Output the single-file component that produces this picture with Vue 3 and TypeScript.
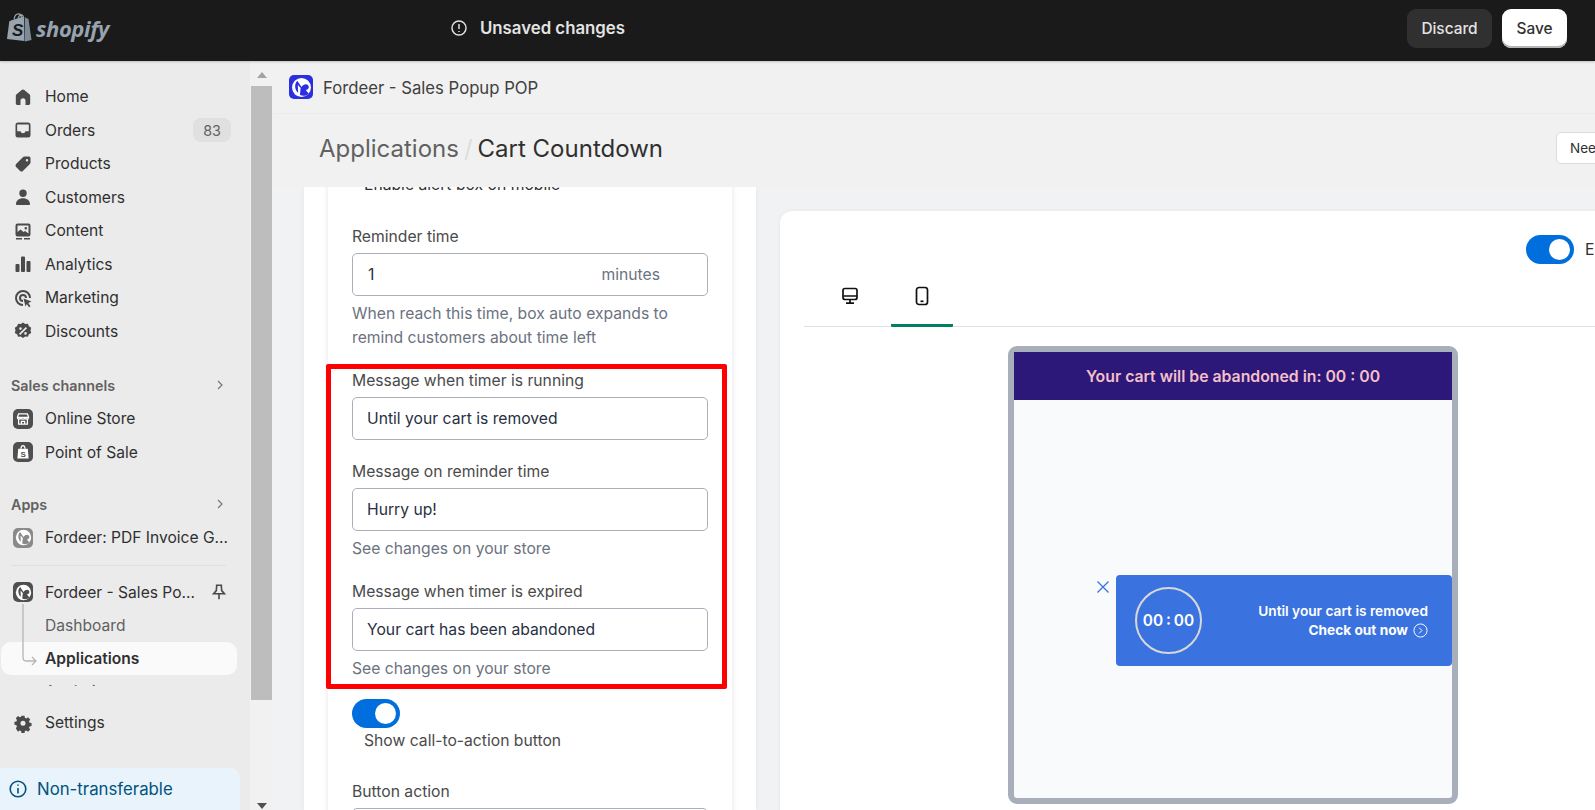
<script setup lang="ts">
interface NavItem {
  label: string;
  icon: string;
  badge?: string;
}

const mainNav: NavItem[] = [
  { label: 'Home', icon: 'M8.700 3 3.600 7.200C3 7.700 2.800 8.300 2.800 9v7.200c0 1 .8 1.800 1.800 1.800H7.500v-4.200a2.500 2.500 0 0 1 5 0V18h2.900c1 0 1.800-.8 1.800-1.800V9c0-.7-.2-1.300-.8-1.800L11.300 3a2 2 0 0 0-2.600 0z' },
  { label: 'Orders', badge: '83', icon: 'M5 2.500h10A2.500 2.500 0 0 1 17.500 5v10a2.500 2.500 0 0 1-2.500 2.500H5A2.500 2.500 0 0 1 2.500 15V5A2.500 2.500 0 0 1 5 2.500zm-.8 2v6.700h3.300c.4 1.300 1.300 2 2.500 2s2.100-.7 2.500-2h3.300V4.500z' },
  { label: 'Products', icon: 'M11.500 2.500H16A1.500 1.500 0 0 1 17.500 4v4.500c0 .5-.2 1-.6 1.400l-7 7a2 2 0 0 1-2.800 0l-4-4a2 2 0 0 1 0-2.800l7-7c.4-.4.9-.6 1.400-.6zM14 5a1.200 1.200 0 1 0 0 2.400A1.200 1.200 0 0 0 14 5z' },
  { label: 'Customers', icon: 'M10 2.500a3.700 3.700 0 1 1 0 7.400 3.700 3.700 0 0 1 0-7.400zM3 17c0-3.500 3-5.800 7-5.800s7 2.300 7 5.800c0 .6-.4 1-1 1H4c-.6 0-1-.4-1-1z' },
  { label: 'Content', icon: 'M4.500 2.500h11a2 2 0 0 1 2 2v9a2 2 0 0 1-2 2h-11a2 2 0 0 1-2-2v-9a2 2 0 0 1 2-2zm0 2V11l3-2.500 3 2.500 1.500-1 3.500 2.500v-8zM12.800 6a1.300 1.300 0 1 0 0 2.600 1.300 1.300 0 0 0 0-2.600zM3 17h6v1.500H3zm8 0h6v1.500h-6z' },
  { label: 'Analytics', icon: 'M3.500 10h2a1 1 0 0 1 1 1v6a1 1 0 0 1-1 1h-2a1 1 0 0 1-1-1v-6a1 1 0 0 1 1-1zM9 2.500h2a1 1 0 0 1 1 1V17a1 1 0 0 1-1 1H9a1 1 0 0 1-1-1V3.500a1 1 0 0 1 1-1zM14.500 7h2a1 1 0 0 1 1 1v9a1 1 0 0 1-1 1h-2a1 1 0 0 1-1-1V8a1 1 0 0 1 1-1z' },
  { label: 'Marketing', icon: 'M10 2a8 8 0 0 1 8 8h-2a6 6 0 1 0-6 6v2a8 8 0 0 1 0-16zm0 4a4 4 0 0 1 4 4h-2a2 2 0 1 0-2 2v2a4 4 0 0 1 0-8zm.500 4.500 8 3-3.200 1.500 2.200 3.200-1.500 1-2.200-3.200-1.300 2.500z' },
  { label: 'Discounts', icon: 'M10 1.500l2.200 1.500 2.700-.2 1 2.500 2.300 1.400-.7 2.600.7 2.600-2.300 1.400-1 2.500-2.700-.2-2.200 1.500-2.200-1.500-2.700.2-1-2.500-2.300-1.400.7-2.600-.7-2.600 2.300-1.400 1-2.500 2.700.2zM7.500 6.300a1.300 1.300 0 1 0 0 2.600 1.300 1.300 0 0 0 0-2.600zm5 4.800a1.300 1.300 0 1 0 0 2.600 1.300 1.300 0 0 0 0-2.600zM12.800 6 6 12.800 7.200 14 14 7.200z' },
];

const fordeerMark = 'M6 3.500 10 9.500C12 6.500 15 6 16.500 8c1.200 1.800 0 4-2.500 4.300l3 3.700c-2 2-6 2.700-8.500 1l.7-6.500L6.500 7.500 6.800 15C4 13 2.500 7 6 3.500z';
</script>

<template>
  <div class="app">
    <header class="topbar">
      <div class="brand">
        <svg class="bag" viewBox="0 0 26 29" width="26" height="29">
          <path d="M8 6.500C8.500 3 10.500 .8 12.500 .8c2 0 3 1.800 3 4.500M12 6c.5-2 1.500-4 3-4.300 2 .3 2.500 2 2.500 3.800" fill="none" stroke="#97a3ae" stroke-width="1.200" />
          <path d="M1 26 3.300 8.300C3.400 7.800 17.500 3.500 18 3.800L18.500 28z" fill="#97a3ae" />
          <path d="M18.800 4 21 5.500l1.500.3L25.500 27l-6.500 1.600z" fill="#7e8a95" />
          <text x="6" y="22.500" class="bag-s">S</text>
        </svg>
        <span class="brand-name">shopify</span>
      </div>
      <div class="unsaved">
        <svg viewBox="0 0 20 20" width="18" height="18" fill="none" stroke="#e3e3e3" stroke-width="1.600">
          <circle cx="10" cy="10" r="7.800" />
          <path d="M10 5.500V11M10 13.300v1.200" />
        </svg>
        <span>Unsaved changes</span>
      </div>
      <div class="top-actions">
        <button class="btn-discard">Discard</button>
        <button class="btn-save">Save</button>
      </div>
    </header>

    <div class="body">
      <nav class="sidebar">
        <div class="nav-main">
          <a v-for="item in mainNav" :key="item.label" class="nav-row">
            <svg class="nav-icon" viewBox="0 0 20 20" width="20" height="20"><path :d="item.icon" fill="#4a4a4a" /></svg>
            <span class="nav-label">{{ item.label }}</span>
            <span v-if="item.badge" class="badge">{{ item.badge }}</span>
          </a>
        </div>

        <div class="nav-heading heading-sales">
          <span>Sales channels</span>
          <svg viewBox="0 0 10 10" width="10" height="10" fill="none" stroke="#777" stroke-width="1.200"><path d="m3 1 4 4-4 4" /></svg>
        </div>
        <a class="nav-row">
          <span class="app-tile">
            <svg viewBox="0 0 20 20" width="16" height="16" fill="none" stroke="#fff" stroke-width="1.600"><path d="M3 8h14M4.500 3.500h11L17 8c0 1.200-1 2-2.300 2s-2.200-.8-2.200-2c0 1.200-1 2-2.500 2s-2.500-.8-2.500-2c0 1.200-1 2-2.200 2S3 9.200 3 8zM4.500 10v6.500h11V10M8 16.500V13h4v3.500" /></svg>
          </span>
          <span class="nav-label">Online Store</span>
        </a>
        <a class="nav-row">
          <span class="app-tile">
            <svg viewBox="0 0 20 20" width="16" height="16"><path d="M4 6h12l1 12H3z" fill="#fff" /><path d="M7.500 6c0-3 1-4 2.500-4s2.500 1 2.500 4" fill="none" stroke="#fff" stroke-width="1.500" /><text x="7" y="16" class="pos-s">S</text></svg>
          </span>
          <span class="nav-label">Point of Sale</span>
        </a>

        <div class="nav-heading heading-apps">
          <span>Apps</span>
          <svg viewBox="0 0 10 10" width="10" height="10" fill="none" stroke="#777" stroke-width="1.200"><path d="m3 1 4 4-4 4" /></svg>
        </div>
        <a class="nav-row">
          <span class="app-tile tile-light">
            <svg viewBox="0 0 20 20" width="17" height="17"><circle cx="10" cy="10" r="9" fill="#fff" /><path :d="fordeerMark" fill="#8a8a8a" /></svg>
          </span>
          <span class="nav-label">Fordeer: PDF Invoice G...</span>
        </a>
        <div class="nav-divider"></div>
        <a class="nav-row">
          <span class="app-tile">
            <svg viewBox="0 0 20 20" width="17" height="17"><circle cx="10" cy="10" r="9" fill="#fff" /><path :d="fordeerMark" fill="#4f4f4f" /></svg>
          </span>
          <span class="nav-label">Fordeer - Sales Po...</span>
          <svg class="pin" viewBox="0 0 20 20" width="18" height="18" fill="none" stroke="#4a4a4a" stroke-width="1.800"><path d="M6.500 2.500h7M7.500 2.500l-.5 6-3 3.500h12L13 8.500l-.5-6M10 12v6" /></svg>
        </a>
        <div class="sub-nav">
          <svg class="tree" viewBox="0 0 24 64" width="24" height="64" fill="none" stroke="#b5b5b5" stroke-width="1.300"><path d="M2 0v53c0 3 1 4 3 4h9M11 53l4 4-4 4" /></svg>
          <a class="sub-row">Dashboard</a>
          <a class="sub-row sub-active">Applications</a>
          <a class="sub-row">Analytics</a>
        </div>
        <a class="nav-row row-settings">
          <svg class="nav-icon" viewBox="0 0 20 20" width="20" height="20"><path fill-rule="evenodd" d="M8.300 2h3.400l.4 2.300 1.500.7 2-1.300 2.400 2.400-1.300 2 .6 1.500 2.200.4v3.400l-2.200.4-.6 1.500 1.300 2-2.400 2.400-2-1.300-1.500.6-.4 2.200H8.300l-.4-2.200-1.500-.6-2 1.300L2 15.900l1.300-2-.6-1.500-2.200-.4V8.600l2.200-.4.6-1.500L2 4.700l2.400-2.400 2 1.300 1.500-.6zM10 7.400a2.800 2.800 0 1 0 0 5.600 2.800 2.800 0 0 0 0-5.600z" fill="#4a4a4a" transform="translate(1 1) scale(.9)" /></svg>
          <span class="nav-label">Settings</span>
        </a>
        <div class="transfer">
          <svg viewBox="0 0 20 20" width="20" height="20" fill="none" stroke="#00527c" stroke-width="1.600"><circle cx="10" cy="10" r="7.800" /><path d="M10 9v5.500M10 5.500v1.300" /></svg>
          <span>Non-transferable</span>
        </div>
      </nav>

      <div class="scrollbar">
        <span class="arrow-up"></span>
        <div class="thumb"></div>
        <span class="arrow-down"></span>
      </div>

      <main class="main">
        <div class="appbar">
          <span class="app-logo">
            <svg viewBox="0 0 20 20" width="21" height="21"><circle cx="10" cy="10" r="9" fill="#fff" /><path :d="fordeerMark" fill="#2a2fe0" /></svg>
          </span>
          <span class="app-name">Fordeer - Sales Popup POP</span>
        </div>
        <div class="page-head">
          <h1 class="crumbs">
            <span class="crumb-parent">Applications</span>
            <span class="crumb-sep">/</span>
            <span>Cart Countdown</span>
          </h1>
          <button class="need-btn">Need help</button>
        </div>

        <div class="content">
          <section class="left-card">
            <div class="form-card">
              <div class="field-clipped">Enable alert box on mobile</div>

              <label class="label label-reminder">Reminder time</label>
              <div class="input">
                <span class="input-num">1</span>
                <span class="input-suffix">minutes</span>
              </div>
              <p class="help help-two">When reach this time, box auto expands to remind customers about time left</p>

              <label class="label label-running">Message when timer is running</label>
              <div class="input">Until your cart is removed</div>

              <label class="label label-reminder-msg">Message on reminder time</label>
              <div class="input">Hurry up!</div>
              <p class="help">See changes on your store</p>

              <label class="label label-expired">Message when timer is expired</label>
              <div class="input">Your cart has been abandoned</div>
              <p class="help">See changes on your store</p>

              <div class="toggle toggle-cta"><span class="knob"></span></div>
              <div class="toggle-label">Show call-to-action button</div>

              <label class="label label-action">Button action</label>
              <div class="input"></div>

              <div class="highlight"></div>
            </div>
          </section>

          <section class="preview-card">
            <div class="enable-row">
              <div class="toggle"><span class="knob"></span></div>
              <span class="enable-text">Enable</span>
            </div>
            <div class="tabs">
              <div class="tab">
                <svg viewBox="0 0 20 20" width="20" height="20" fill="none" stroke="#111" stroke-width="1.700"><rect x="3" y="2.500" width="14" height="11" rx="2" /><path d="M3 10h14M10 13.500v3M6 17.200h8" /></svg>
              </div>
              <div class="tab tab-active">
                <svg viewBox="0 0 20 20" width="20" height="20" fill="none" stroke="#111" stroke-width="1.700"><rect x="4.500" y="1.500" width="11" height="17" rx="2.500" /><path d="M8.500 15.300h3" /></svg>
              </div>
            </div>

            <div class="device">
              <div class="device-banner">Your cart will be abandoned in: 00 : 00</div>
              <div class="device-screen">
                <button class="popup-close">
                  <svg viewBox="0 0 14 14" width="14" height="14" fill="none" stroke="#3a73e0" stroke-width="1.300"><path d="m1.500 1.500 11 11M12.500 1.500l-11 11" /></svg>
                </button>
                <div class="popup">
                  <div class="timer">00 : 00</div>
                  <div class="popup-text">
                    <div class="popup-msg">Until your cart is removed</div>
                    <div class="popup-cta">
                      <span>Check out now</span>
                      <svg viewBox="0 0 16 16" width="15" height="15" fill="none" stroke="#fff" stroke-width="1"><circle cx="8" cy="8" r="7" /><path d="m6.500 5 3 3-3 3" /></svg>
                    </div>
                  </div>
                </div>
              </div>
            </div>
          </section>
        </div>
      </main>
    </div>
  </div>
</template>

<style>
html,
body {
  margin: 0;
  overflow: hidden;
}
</style>

<style scoped>
.app {
  width: 1595px;
  height: 810px;
  display: flex;
  flex-direction: column;
  overflow: hidden;
  background: #f1f1f1;
  font-family: Inter, "Noto Sans", sans-serif;
  color: #303030;
}

/* top bar */
.topbar {
  height: 61px;
  flex: none;
  background: #1a1a1a;
  display: flex;
  align-items: center;
  position: relative;
  box-shadow: 0 1px 2px rgba(0, 0, 0, 0.2);
  z-index: 2;
}

.brand {
  display: flex;
  align-items: center;
  gap: 4px;
  padding: 0 0 6px 6px;
  width: 450px;
  box-sizing: border-box;
}

.bag-s {
  font: italic 700 17px "Liberation Sans", sans-serif;
  fill: #1a1a1a;
}

.pos-s {
  font: 700 10px "Liberation Sans", sans-serif;
  fill: #4f4f4f;
}

.brand-name {
  font: italic 700 22px "Open Sans", sans-serif;
  color: #97a3ae;
  letter-spacing: -0.4px;
}

.unsaved {
  display: flex;
  align-items: center;
  gap: 12px;
  padding-bottom: 5px;
  color: #e3e3e3;
  font-size: 16.800px;
  font-weight: 600;
}

.top-actions {
  margin-left: auto;
  padding: 0 28px 5px 0;
  display: flex;
  gap: 10px;
}

.top-actions button {
  height: 39px;
  border: 0;
  border-radius: 9px;
  font: 500 15.400px Inter, sans-serif;
}

.btn-discard {
  width: 85px;
  background: #303030;
  color: #e3e3e3;
}

.btn-save {
  width: 65px;
  background: #fff;
  color: #303030;
  box-shadow: inset 0 -2px 0 #b5b5b5;
}

.body {
  flex: 1;
  min-height: 0;
  display: flex;
}

/* sidebar */
.sidebar {
  width: 250px;
  flex: none;
  background: #ebebeb;
  box-sizing: border-box;
  padding-top: 19px;
  display: flex;
  flex-direction: column;
  font-size: 15.600px;
  position: relative;
}

.nav-row {
  height: 33.500px;
  flex: none;
  display: flex;
  align-items: center;
  padding: 0 19px 0 13px;
  box-sizing: border-box;
}

.nav-icon {
  flex: none;
  margin-right: 12px;
}

.nav-label {
  white-space: nowrap;
  color: #303030;
}

.badge {
  margin-left: auto;
  width: 38px;
  height: 24px;
  border-radius: 8px;
  background: #e0e0e0;
  display: flex;
  align-items: center;
  justify-content: center;
  font-size: 14.300px;
  color: #616161;
}

.nav-heading {
  height: 24px;
  flex: none;
  display: flex;
  align-items: center;
  justify-content: space-between;
  padding: 0 25px 0 11px;
  margin-bottom: 5px;
  font-size: 14.300px;
  font-weight: 600;
  color: #616161;
}

.heading-sales {
  margin-top: 25px;
}

.heading-apps {
  margin-top: 23px;
}

.app-tile {
  width: 20px;
  height: 20px;
  border-radius: 5px;
  background: #4f4f4f;
  display: flex;
  align-items: center;
  justify-content: center;
  margin-right: 12px;
  flex: none;
}

.tile-light {
  background: #8a8a8a;
}

.nav-divider {
  height: 1px;
  flex: none;
  background: #e0e0e0;
  margin: 10px 24px 10px 11px;
}

.pin {
  margin-left: auto;
  margin-right: 3px;
  flex: none;
}

.sub-nav {
  position: relative;
  height: 82px;
  box-sizing: border-box;
  margin-top: -5px;
  padding-top: 5px;
  flex: none;
  overflow: hidden;
  display: flex;
  flex-direction: column;
}

.tree {
  position: absolute;
  left: 21px;
  top: 0;
  z-index: 1;
}

.sub-row {
  height: 33px;
  flex: none;
  display: flex;
  align-items: center;
  margin: 0 13px 0 1px;
  padding-left: 44px;
  color: #616161;
  border-radius: 10px;
}

.sub-active {
  background: #fafafa;
  color: #303030;
  font-weight: 600;
}

.row-settings {
  margin-top: 20px;
}

.transfer {
  position: absolute;
  left: 0;
  bottom: 0;
  width: 240px;
  height: 42px;
  box-sizing: border-box;
  padding: 0 0 0 8px;
  background: #e8f3fc;
  border-radius: 0 10px 0 0;
  display: flex;
  align-items: center;
  gap: 9px;
  color: #00527c;
  font-size: 16.800px;
}

/* page scrollbar */
.scrollbar {
  width: 23px;
  flex: none;
  background: #f1f1f1;
  display: flex;
  flex-direction: column;
  align-items: center;
}

.arrow-up {
  margin-top: 11px;
  border: 5px solid transparent;
  border-top: 0;
  border-bottom: 6px solid #a3a3a3;
}

.thumb {
  width: 21px;
  height: 614px;
  margin-top: 8px;
  background: #bdbdbd;
}

.arrow-down {
  margin-top: auto;
  margin-bottom: 1px;
  border: 5px solid transparent;
  border-bottom: 0;
  border-top: 6px solid #505050;
}

/* main */
.main {
  flex: 1;
  min-width: 0;
  display: flex;
  flex-direction: column;
}

.appbar {
  height: 52px;
  flex: none;
  display: flex;
  align-items: center;
  gap: 10px;
  padding-left: 16px;
  border-bottom: 1px solid #ebebeb;
  font-size: 16.700px;
  color: #404040;
}

.app-name {
  padding-top: 2px;
}

.app-logo {
  width: 24px;
  height: 24px;
  border-radius: 5px;
  background: #2a2fe0;
  display: flex;
  align-items: center;
  justify-content: center;
}

.page-head {
  height: 73px;
  flex: none;
  display: flex;
  align-items: center;
  padding: 0 0 5px 46px;
  box-sizing: border-box;
}

.crumbs {
  margin: 0;
  display: flex;
  gap: 5px;
  font-size: 24px;
  font-weight: 400;
  color: #303030;
}

.crumb-parent {
  color: #616161;
}

.crumb-sep {
  color: #ddd;
}

.need-btn {
  margin-left: auto;
  margin-right: -60px;
  width: 99px;
  height: 32px;
  flex: none;
  padding: 0 0 0 13px;
  text-align: left;
  background: #fff;
  border: 1px solid #dcdcdc;
  border-radius: 5px;
  font: 13.500px Inter, sans-serif;
  color: #303030;
}

.content {
  flex: 1;
  min-height: 0;
  display: flex;
  gap: 24px;
  padding-left: 31px;
  overflow: hidden;
  background: #f1f2f4;
}

.left-card {
  width: 452px;
  flex: none;
  background: #fff;
  padding: 0 24px;
  box-sizing: border-box;
  box-shadow: 0 0 6px rgba(0, 0, 0, 0.06);
}

.form-card {
  height: 700px;
  box-sizing: border-box;
  margin-top: -14px;
  padding: 0 24px;
  background: #fff;
  box-shadow: 0 0 6px rgba(0, 0, 0, 0.1);
  position: relative;
  font-size: 15.700px;
  line-height: 24px;
}

.field-clipped {
  padding-left: 12px;
}

.label {
  display: block;
  margin-bottom: 4px;
  color: #4a4a4a;
}

.label-reminder {
  margin-top: 28px;
}

.label-running {
  margin-top: 19px;
}

.label-reminder-msg {
  margin-top: 20px;
}

.label-expired {
  margin-top: 19px;
}

.label-action {
  margin-top: 27px;
}

.input {
  height: 43px;
  box-sizing: border-box;
  border: 1px solid #a9aeb8;
  border-radius: 5px;
  padding: 1px 14px 0;
  display: flex;
  align-items: center;
  background: #fff;
  color: #27303f;
}

.input-num {
  flex: 1;
  padding-left: 1px;
}

.input-suffix {
  color: #6b7280;
  margin-right: 33px;
}

.help {
  margin: 6px 0 0;
  color: #6b7280;
}

.toggle {
  width: 48px;
  height: 29px;
  box-sizing: border-box;
  border-radius: 15px;
  background: #006fdd;
  display: flex;
  align-items: center;
  justify-content: flex-end;
  padding-right: 4px;
  flex: none;
}

.toggle-cta {
  margin-top: 18px;
}

.knob {
  width: 21px;
  height: 21px;
  border-radius: 50%;
  background: #fff;
}

.toggle-label {
  padding-left: 12px;
  margin-top: 1px;
  color: #4a4a4a;
}

/* screenshot annotation */
.highlight {
  position: absolute;
  left: -2px;
  top: 191px;
  width: 401px;
  height: 325px;
  box-sizing: border-box;
  border: 5px solid #fe0000;
  border-radius: 2px;
  pointer-events: none;
}

/* preview */
.preview-card {
  width: 1000px;
  flex: none;
  height: 700px;
  margin-top: 24px;
  background: #fff;
  border-radius: 12px 0 0 0;
  box-sizing: border-box;
  padding: 24px 24px 0;
  box-shadow: 0 0 4px rgba(0, 0, 0, 0.05);
}

.enable-row {
  display: flex;
  align-items: center;
  gap: 11px;
  padding-left: 722px;
  font-size: 15.700px;
}

.tabs {
  display: flex;
  height: 64px;
  box-sizing: border-box;
  margin-top: -1px;
  padding-left: 15px;
  border-bottom: 1px solid #dfe0e6;
}

.tab {
  width: 62px;
  height: 64px;
  box-sizing: border-box;
  margin-right: 10px;
  padding-top: 23px;
  display: flex;
  justify-content: center;
}

.tab-active {
  border-bottom: 3px solid #008060;
  border-radius: 0 0 1px 1px;
}

.device {
  width: 450px;
  height: 458px;
  box-sizing: border-box;
  margin: 19px 0 0 204px;
  border: 6px solid #a8afbb;
  border-radius: 9px;
  background: #f9fafb;
  display: flex;
  flex-direction: column;
}

.device-banner {
  height: 48px;
  flex: none;
  background: #2b1878;
  color: #f5bfca;
  display: flex;
  align-items: center;
  justify-content: center;
  font-size: 15.800px;
  font-weight: 600;
}

.device-screen {
  flex: 1;
  display: flex;
  align-items: flex-start;
  justify-content: flex-end;
  padding-top: 175px;
}

.popup-close {
  background: none;
  border: 0;
  padding: 0;
  margin: 5px 6px 0 0;
  height: 14px;
  display: flex;
}

.popup {
  width: 336px;
  height: 91px;
  box-sizing: border-box;
  background: #3a73e0;
  border-radius: 4px;
  padding: 0 24px 0 19px;
  display: flex;
  align-items: center;
  justify-content: space-between;
  color: #fff;
  font-weight: 600;
}

.timer {
  width: 67px;
  height: 67px;
  box-sizing: border-box;
  border: 2px solid #d8d8d8;
  border-radius: 50%;
  display: flex;
  align-items: center;
  justify-content: center;
  font-size: 15.400px;
  word-spacing: -1px;
  white-space: nowrap;
}

.popup-text {
  text-align: right;
  font-size: 13.700px;
  line-height: 19px;
  padding-top: 1px;
}

.popup-cta {
  display: flex;
  align-items: center;
  justify-content: flex-end;
  gap: 5px;
  font-weight: 700;
}
</style>
